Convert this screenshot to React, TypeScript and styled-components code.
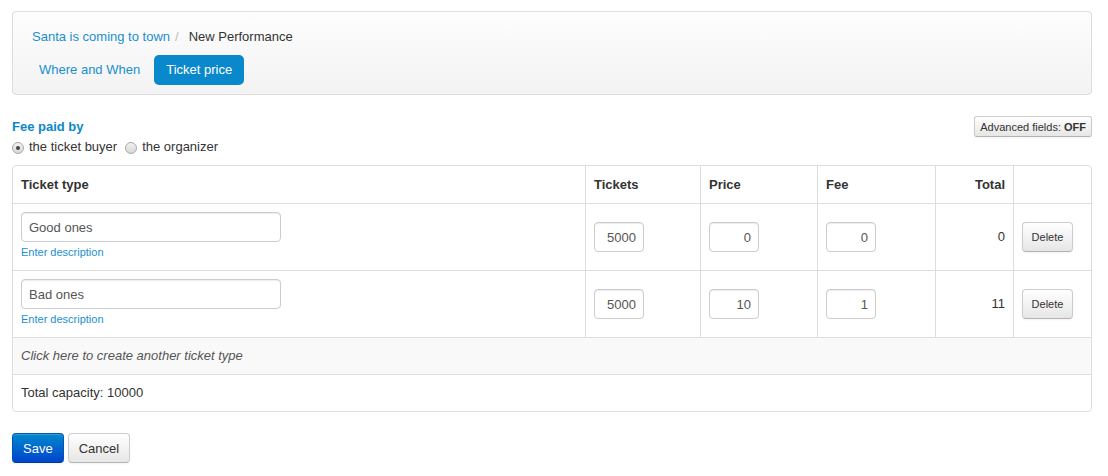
import React from "react";
import styled, { createGlobalStyle } from "styled-components";

const Global = createGlobalStyle`
  * { box-sizing: border-box; }
  html, body { margin: 0; padding: 0; background: #fff; }
  body {
    font-family: "Liberation Sans", Arial, Helvetica, sans-serif;
    font-size: 13px;
    line-height: 20px;
    color: #333;
  }
`;

const Page = styled.div`
  padding: 11px 16px 12px 12px;
`;

const HeaderPanel = styled.div`
  border: 1px solid #ddd;
  border-radius: 4px;
  background: linear-gradient(to bottom, #fdfdfd, #f3f3f3);
  padding: 15px 14px 9px 14px;
  display: flex;
  flex-direction: column;
  gap: 8px;
`;

const Breadcrumb = styled.div`
  display: flex;
  align-items: center;
  padding-left: 5px;
  line-height: 20px;
`;

const CrumbLink = styled.a`
  color: #1a8fd0;
  text-decoration: none;
`;

const Divider = styled.span`
  color: #bbb;
  margin: 0 10px 0 5px;
`;

const CrumbActive = styled.span`
  color: #333;
`;

const Pills = styled.div`
  display: flex;
  gap: 2px;
`;

const Pill = styled.a<{ $active?: boolean }>`
  display: block;
  padding: 5px 12px;
  line-height: 20px;
  border-radius: 5px;
  text-decoration: none;
  color: ${(p) => (p.$active ? "#fff" : "#1a8fd0")};
  background: ${(p) => (p.$active ? "#0a88cc" : "transparent")};
`;

const OptionsBar = styled.div`
  display: flex;
  justify-content: space-between;
  align-items: flex-start;
  margin-top: 24px;
  margin-bottom: 9px;
`;

const FeeBlock = styled.div`
  display: flex;
  flex-direction: column;
  gap: 3px;
`;

const FeeTitle = styled.div`
  font-weight: bold;
  color: #0a88cc;
  line-height: 16px;
`;

const RadioRow = styled.div`
  display: flex;
  align-items: center;
  line-height: 18px;
`;

const RadioLabel = styled.label`
  display: flex;
  align-items: center;
  gap: 5px;
  margin-right: 8px;
  color: #333;
`;

const RadioDot = styled.span<{ $checked?: boolean }>`
  width: 12px;
  height: 12px;
  border-radius: 50%;
  border: 1px solid #a8a8a8;
  background: linear-gradient(to bottom, #f2f2f2, #d8d8d8);
  display: inline-flex;
  align-items: center;
  justify-content: center;
  margin-top: 2px;
  &::after {
    content: "";
    width: 4px;
    height: 4px;
    border-radius: 50%;
    background: ${(p) => (p.$checked ? "#444" : "transparent")};
  }
`;

const MiniButton = styled.button`
  font-family: inherit;
  font-size: 11px;
  line-height: 18px;
  height: 21px;
  padding: 0 5px;
  color: #333;
  border: 1px solid #ccc;
  border-bottom-color: #b3b3b3;
  border-radius: 3px;
  background: linear-gradient(to bottom, #ffffff, #e6e6e6);
  box-shadow: inset 0 1px 0 rgba(255, 255, 255, 0.2), 0 1px 2px rgba(0, 0, 0, 0.05);
  margin-top: -3px;
  b { font-weight: bold; }
`;

const Table = styled.table`
  width: 100%;
  table-layout: fixed;
  border-collapse: separate;
  border-spacing: 0;
  border: 1px solid #ddd;
  border-radius: 4px;
`;

const Th = styled.th<{ $w?: number; $align?: string }>`
  width: ${(p) => (p.$w ? `${p.$w}px` : "auto")};
  text-align: ${(p) => p.$align || "left"};
  font-weight: bold;
  padding: 9px 8px 8px;
  line-height: 20px;
  border-left: 1px solid #ddd;
  &:first-child { border-left: none; }
`;

const Td = styled.td<{ $align?: string; $top?: boolean }>`
  padding: 8px;
  line-height: 20px;
  border-left: 1px solid #ddd;
  border-top: 1px solid #ddd;
  vertical-align: ${(p) => (p.$top ? "top" : "middle")};
  text-align: ${(p) => p.$align || "left"};
  &:first-child { border-left: none; }
`;

const WideTd = styled.td<{ $muted?: boolean }>`
  padding: 8px;
  line-height: 20px;
  border-top: 1px solid #ddd;
  background: ${(p) => (p.$muted ? "#f9f9f9" : "#fff")};
  color: ${(p) => (p.$muted ? "#555" : "#333")};
  font-style: ${(p) => (p.$muted ? "italic" : "normal")};
  border-radius: ${(p) => (p.$muted ? "0" : "0 0 4px 4px")};
`;

const TextInput = styled.input<{ $w: number; $right?: boolean }>`
  display: block;
  width: ${(p) => p.$w}px;
  height: 30px;
  padding: 4px 7px;
  font-family: inherit;
  font-size: 13px;
  color: #555;
  border: 1px solid #ccc;
  border-radius: 4px;
  box-shadow: inset 0 1px 1px rgba(0, 0, 0, 0.075);
  text-align: ${(p) => (p.$right ? "right" : "left")};
  background: #fff;
  outline: none;
`;

const DescLink = styled.a`
  display: block;
  font-size: 11px;
  line-height: 20px;
  color: #1a8fd0;
  text-decoration: none;
`;

const SmallButton = styled.button`
  font-family: inherit;
  font-size: 11px;
  height: 30px;
  width: 51px;
  padding: 0;
  color: #333;
  border: 1px solid #ccc;
  border-bottom-color: #b3b3b3;
  border-radius: 4px;
  background: linear-gradient(to bottom, #ffffff, #e6e6e6);
  box-shadow: inset 0 1px 0 rgba(255, 255, 255, 0.2), 0 1px 2px rgba(0, 0, 0, 0.05);
`;

const Actions = styled.div`
  display: flex;
  gap: 4px;
  margin-top: 21px;
`;

const Button = styled.button<{ $primary?: boolean }>`
  font-family: inherit;
  font-size: 13px;
  height: 30px;
  padding: 0 10px;
  border-radius: 4px;
  color: ${(p) => (p.$primary ? "#fff" : "#333")};
  border: 1px solid ${(p) => (p.$primary ? "#0055b8" : "#ccc")};
  border-bottom-color: ${(p) => (p.$primary ? "#003b99" : "#b3b3b3")};
  background: ${(p) =>
    p.$primary
      ? "linear-gradient(to bottom, #0088cc, #0044cc)"
      : "linear-gradient(to bottom, #ffffff, #e6e6e6)"};
  box-shadow: inset 0 1px 0 rgba(255, 255, 255, 0.2), 0 1px 2px rgba(0, 0, 0, 0.05);
`;

type Ticket = { name: string; tickets: string; price: string; fee: string; total: string };

const tickets: Ticket[] = [
  { name: "Good ones", tickets: "5000", price: "0", fee: "0", total: "0" },
  { name: "Bad ones", tickets: "5000", price: "10", fee: "1", total: "11" },
];

export default function App() {
  return (
    <>
      <Global />
      <Page>
        <HeaderPanel>
          <Breadcrumb>
            <CrumbLink href="#">Santa is coming to town</CrumbLink>
            <Divider>/</Divider>
            <CrumbActive>New Performance</CrumbActive>
          </Breadcrumb>
          <Pills>
            <Pill href="#">Where and When</Pill>
            <Pill href="#" $active>
              Ticket price
            </Pill>
          </Pills>
        </HeaderPanel>

        <OptionsBar>
          <FeeBlock>
            <FeeTitle>Fee paid by</FeeTitle>
            <RadioRow>
              <RadioLabel>
                <RadioDot $checked />
                the ticket buyer
              </RadioLabel>
              <RadioLabel>
                <RadioDot />
                the organizer
              </RadioLabel>
            </RadioRow>
          </FeeBlock>
          <MiniButton>
            Advanced fields: <b>OFF</b>
          </MiniButton>
        </OptionsBar>

        <Table>
          <thead>
            <tr>
              <Th>Ticket type</Th>
              <Th $w={115}>Tickets</Th>
              <Th $w={117}>Price</Th>
              <Th $w={118}>Fee</Th>
              <Th $w={78} $align="right">
                Total
              </Th>
              <Th $w={78}></Th>
            </tr>
          </thead>
          <tbody>
            {tickets.map((t) => (
              <tr key={t.name}>
                <Td $top>
                  <TextInput $w={260} defaultValue={t.name} />
                  <DescLink href="#">Enter description</DescLink>
                </Td>
                <Td>
                  <TextInput $w={50} $right defaultValue={t.tickets} />
                </Td>
                <Td>
                  <TextInput $w={50} $right defaultValue={t.price} />
                </Td>
                <Td>
                  <TextInput $w={50} $right defaultValue={t.fee} />
                </Td>
                <Td $align="right">{t.total}</Td>
                <Td>
                  <SmallButton>Delete</SmallButton>
                </Td>
              </tr>
            ))}
            <tr>
              <WideTd colSpan={6} $muted>
                Click here to create another ticket type
              </WideTd>
            </tr>
            <tr>
              <WideTd colSpan={6}>Total capacity: 10000</WideTd>
            </tr>
          </tbody>
        </Table>

        <Actions>
          <Button $primary>Save</Button>
          <Button>Cancel</Button>
        </Actions>
      </Page>
    </>
  );
}
